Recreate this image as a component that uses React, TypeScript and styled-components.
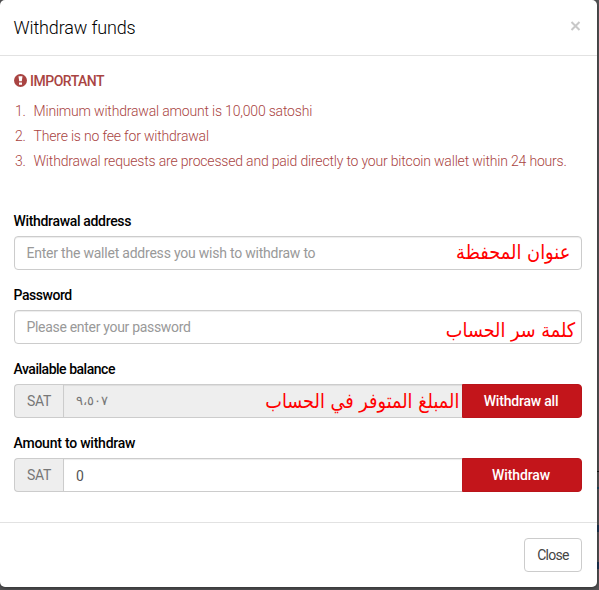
import React from "react";
import styled, { createGlobalStyle } from "styled-components";

const GlobalStyle = createGlobalStyle`
  * { box-sizing: border-box; }
  body {
    margin: 0;
    overflow: hidden;
    background: #505052;
    font: 400 14px/20px Roboto, "Open Sans", sans-serif;
    color: #000;
  }
`;

const Backdrop = styled.div`
  height: 590px;
  display: flex;
  background: #555557;
`;

const PageEdge = styled.div`
  width: 2px;
  height: 590px;
  padding-top: 471px;
  background: #555557;
`;

const EdgeMark = styled.div<{ $gap: number; $color: string; $height: number }>`
  margin-top: ${(p) => p.$gap}px;
  height: ${(p) => p.$height}px;
  background: ${(p) => p.$color};
`;

const Modal = styled.section`
  flex: none;
  width: 597px;
  height: 587px;
  display: flex;
  flex-direction: column;
  background: #fff;
  border-radius: 5px;
  box-shadow: 0 1px 4px rgba(0, 0, 0, 0.5);
  z-index: 1;
`;

const Header = styled.header`
  height: 56px;
  padding: 0 15px 0 13.5px;
  display: flex;
  align-items: center;
  justify-content: space-between;
  border-bottom: 1px solid #e2e2e2;
`;

const Title = styled.h4`
  margin: 0;
  font-size: 18px;
  font-weight: 300;
  letter-spacing: -0.14px;
  color: #000;
`;

const Dismiss = styled.button`
  display: flex;
  margin-top: -4px;
  padding: 0;
  border: 0;
  background: none;
  color: #c8c8c8;
`;

const Body = styled.div`
  flex: 1;
  padding: 15px 15px 0 14px;
`;

const Notice = styled.div`
  height: 140px;
  color: #a94442;
`;

const NoticeTitle = styled.div`
  display: flex;
  align-items: center;
  gap: 3px;
  font-weight: 500;
  letter-spacing: -0.5px;
`;

const Rules = styled.ol`
  margin: 8px 0 0;
  padding: 0;
  list-style: none;
  font-weight: 300;
  line-height: 25px;
  counter-reset: rule;
`;

const Rule = styled.li`
  display: flex;
  letter-spacing: -0.187px;
  white-space: nowrap;
  counter-increment: rule;

  &::before {
    content: counter(rule) ".";
    width: 18.5px;
    padding-left: 1px;
  }
`;

const Field = styled.div`
  position: relative;
  margin-bottom: 15px;
`;

const Label = styled.label<{ $tracking: number }>`
  display: block;
  margin: 0 0 5px -0.5px;
  font-weight: 500;
  letter-spacing: ${(p) => p.$tracking}px;
`;

const Input = styled.div<{ $tracking: number }>`
  height: 34px;
  padding: 6px 11.5px;
  border: 1px solid #ccc;
  border-radius: 4px;
  box-shadow: inset 0 1px 1px rgba(0, 0, 0, 0.075);
  color: #999;
  letter-spacing: ${(p) => p.$tracking}px;
`;

const Group = styled.div`
  display: flex;
  height: 34px;
`;

const Addon = styled.span`
  width: 50px;
  padding: 6px 12px;
  background: #eee;
  border: 1px solid #ccc;
  border-right: 0;
  border-radius: 4px 0 0 4px;
  color: #777;
  letter-spacing: -0.3px;
`;

const Amount = styled.div<{ $locked?: boolean }>`
  flex: 1;
  padding: ${(p) => (p.$locked ? "5px 12px" : "7px 12px")};
  margin-left: -1px;
  background: ${(p) => (p.$locked ? "#eee" : "#fff")};
  border: 1px solid #ccc;
  border-right: 0;
  box-shadow: inset 0 1px 1px rgba(0, 0, 0, 0.075);
  color: #555;
`;

const Digits = styled.span`
  font: 300 12.5px/20px "DejaVu Sans", sans-serif;
  color: #777;
`;

const Action = styled.button<{ $tracking: number }>`
  width: 120px;
  padding: 0 2px 0 0;
  background: #c3151b;
  border: 1px solid #b9141a;
  border-radius: 0 4px 4px 0;
  color: #fff;
  font: 500 14px/20px Roboto, sans-serif;
  letter-spacing: ${(p) => p.$tracking}px;
`;

const Annotation = styled.span<{ $right: number; $top: number; $squeeze: number }>`
  position: absolute;
  right: ${(p) => p.$right}px;
  top: ${(p) => p.$top}px;
  font: 20px/30px "DejaVu Sans", sans-serif;
  color: #f00;
  white-space: nowrap;
  transform: scaleX(${(p) => p.$squeeze});
  transform-origin: right center;
`;

const Footer = styled.footer`
  height: 65px;
  padding: 15px;
  display: flex;
  justify-content: flex-end;
  border-top: 1px solid #e2e2e2;
`;

const Close = styled.button`
  width: 58px;
  height: 34px;
  padding: 0;
  background: #fff;
  border: 1px solid #ccc;
  border-radius: 4px;
  color: #444;
  font: 400 14px/20px Roboto, sans-serif;
  letter-spacing: -0.7px;
`;

export default function App() {
  return (
    <Backdrop>
      <GlobalStyle />
      <Modal>
        <Header>
          <Title>Withdraw funds</Title>
          <Dismiss aria-label="Dismiss">
            <svg width="12" height="10" viewBox="0 0 12 10">
              <path d="M1.5 1 9.5 9M9.5 1 1.5 9" stroke="currentColor" strokeWidth="2" />
            </svg>
          </Dismiss>
        </Header>
        <Body>
          <Notice>
            <NoticeTitle>
              <svg width="13" height="14" viewBox="0 0 13 14">
                <circle cx="6.5" cy="6.5" r="6.5" fill="#a94442" />
                <path d="M4.5 2.2h4L7.8 7.3H5.2zM5 8.5h3v2.2H5z" fill="#fff" />
              </svg>
              IMPORTANT
            </NoticeTitle>
            <Rules>
              <Rule>Minimum withdrawal amount is 10,000 satoshi</Rule>
              <Rule>There is no fee for withdrawal</Rule>
              <Rule>Withdrawal requests are processed and paid directly to your bitcoin wallet within 24 hours.</Rule>
            </Rules>
          </Notice>
          <Field>
            <Label $tracking={-0.33}>Withdrawal address</Label>
            <Input $tracking={-0.22}>Enter the wallet address you wish to withdraw to</Input>
            <Annotation dir="rtl" $right={12} $top={26} $squeeze={0.89}>عنوان المحفظة</Annotation>
          </Field>
          <Field>
            <Label $tracking={-0.46}>Password</Label>
            <Input $tracking={-0.31}>Please enter your password</Input>
            <Annotation dir="rtl" $right={7} $top={30} $squeeze={0.885}>كلمة سر الحساب</Annotation>
          </Field>
          <Field>
            <Label $tracking={-0.48}>Available balance</Label>
            <Group>
              <Addon>SAT</Addon>
              <Amount $locked><Digits>٩،٥٠٧</Digits></Amount>
              <Action $tracking={-0.2}>Withdraw all</Action>
            </Group>
            <Annotation dir="rtl" $right={122.5} $top={27} $squeeze={0.885}>المبلغ المتوفر في الحساب</Annotation>
          </Field>
          <Field>
            <Label $tracking={-0.23}>Amount to withdraw</Label>
            <Group>
              <Addon>SAT</Addon>
              <Amount>0</Amount>
              <Action $tracking={-0.1}>Withdraw</Action>
            </Group>
          </Field>
        </Body>
        <Footer>
          <Close>Close</Close>
        </Footer>
      </Modal>
      <PageEdge>
        <EdgeMark $gap={0} $height={1} $color="#111" />
        <EdgeMark $gap={15} $height={2} $color="#1d4a63" />
        <EdgeMark $gap={36} $height={7} $color="#1c3554" />
        <EdgeMark $gap={30} $height={7} $color="#1c3554" />
      </PageEdge>
    </Backdrop>
  );
}
